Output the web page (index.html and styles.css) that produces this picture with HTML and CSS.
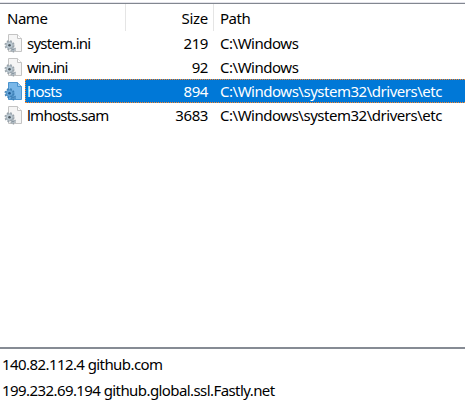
FILE: index.html
```html
<!DOCTYPE html>
<html lang="en">
<head>
<meta charset="utf-8">
<title>Hosts</title>
<link rel="stylesheet" href="styles.css">
</head>
<body>
<svg width="0" height="0" class="defs">
  <symbol id="file" viewBox="0 0 20 20">
    <path class="page" d="M5.5 1.5H14.5L18.5 5.5V18.5H5.5Z"/>
    <path class="fold" d="M14.5 1.5V5.5H18.5"/>
    <circle class="gear-teeth" cx="6.5" cy="12.2" r="4.3"/>
    <circle class="gear" cx="6.5" cy="12.2" r="3.5"/>
    <circle class="gear-teeth small" cx="10" cy="16.5" r="2.2"/>
    <circle class="gear" cx="10" cy="16.5" r="1.6"/>
    <circle class="hub" cx="6.5" cy="12.2" r="1.3"/>
    <circle class="hub" cx="10" cy="16.5" r=".6"/>
  </symbol>
</svg>
<main class="list">
  <div class="header"><span class="col-name">Name</span><span class="col-size">Size</span><span class="col-path">Path</span></div>
  <div class="row"><svg class="icon"><use href="#file"/></svg><div class="cells"><span class="name">system.ini</span><span class="size">219</span><span class="path">C:\Windows</span></div></div>
  <div class="row"><svg class="icon"><use href="#file"/></svg><div class="cells"><span class="name">win.ini</span><span class="size">92</span><span class="path">C:\Windows</span></div></div>
  <div class="row selected"><svg class="icon"><use href="#file"/></svg><div class="cells"><span class="name">hosts</span><span class="size">894</span><span class="path">C:\Windows\system32\drivers\etc</span></div></div>
  <div class="row"><svg class="icon"><use href="#file"/></svg><div class="cells"><span class="name">lmhosts.sam</span><span class="size">3683</span><span class="path">C:\Windows\system32\drivers\etc</span></div></div>
</main>
<section class="editor">
  <div class="line">140.82.112.4 github.com</div>
  <div class="line">199.232.69.194 github.global.ssl.Fastly.net</div>
</section>
</body>
</html>
```
FILE: styles.css
```css
* { box-sizing: border-box; }
body {
  --page: #f5f5f5;
  --edge: #c4c4c4;
  --fold: #fff;
  --gear: #bccad3;
  --teeth: #96a1a9;
  --hub: #4f5a62;
  margin: 0;
  height: 404px;
  overflow: hidden;
  display: flex;
  flex-direction: column;
  background: #fff;
  color: #000;
  font: 15px/24px "Noto Sans", "Open Sans", sans-serif;
  letter-spacing: -0.48px;
  white-space: nowrap;
}
.defs { display: block; height: 0; flex: none; }
.list { height: 347px; padding-top: 2px; }
.header {
  display: flex;
  height: 29px;
  border-top: 1px solid #e3e3ea;
  box-shadow: inset 0 1px #828790;
  line-height: 30px;
}
.header > span { border-right: 1px solid #e5e5e5; margin-top: 1px; line-height: 28px; }
.col-name { width: 126px; padding-left: 7px; }
.col-size { width: 88px; padding-right: 5px; text-align: right; letter-spacing: -0.3px; }
.header .col-path { padding-left: 6px; border: 0; }
.row { display: flex; height: 24px; }
.icon { width: 20px; height: 20px; margin: 2px 2px 0 3px; }
.cells { flex: 1; display: flex; padding-left: 2px; line-height: 24px; }
.name { width: 101px; letter-spacing: -0.75px; }
.size { width: 80px; text-align: right; letter-spacing: -0.4px; }
.path { padding-left: 12px; }
.selected {
  --page: #7ab7e8;
  --edge: #4b94cf;
  --fold: #a5d0f2;
  --gear: #65a5d9;
  --teeth: #3c7fb5;
  --hub: #1f5b91;
}
.selected .cells {
  background: #0078d7;
  color: #fff;
  padding-left: 1px;
  border: 1px dotted #ff8728;
  border-right: 0;
  line-height: 22px;
}
.page { fill: var(--page); stroke: var(--edge); }
.fold { fill: var(--fold); stroke: var(--edge); }
.gear-teeth { fill: none; stroke: var(--teeth); stroke-width: 1.5; stroke-dasharray: 1.8 1.6; }
.gear-teeth.small { stroke-dasharray: 1.1 1.1; }
.gear { fill: var(--gear); stroke: var(--teeth); stroke-width: .7; }
.hub { fill: var(--hub); }
.editor {
  flex: 1;
  border-top: 2px solid #868b94;
  padding: 2px 0 0 2px;
  line-height: 26px;
  letter-spacing: -0.58px;
}
```
